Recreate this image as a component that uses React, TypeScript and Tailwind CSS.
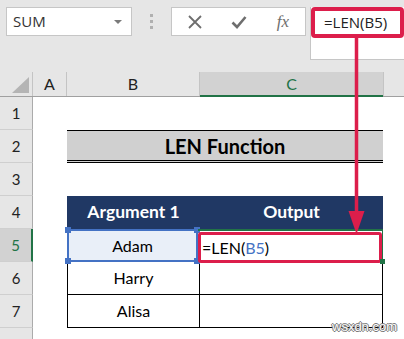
import React from 'react';

const calibri = "font-['Lato','Liberation_Sans',sans-serif]";
const segoe = "font-['Open_Sans','Liberation_Sans',sans-serif]";

const RowHead = ({ n, active = false }: { n: number; active?: boolean }) => (
  <div
    className={`w-[33px] shrink-0 h-full flex items-center justify-center text-[15px] border-b border-[#cfcfcf] ${
      active
        ? 'bg-[#d2d2d2] text-[#217346] border-r-2 border-r-[#217346]'
        : 'bg-[#e6e6e6] text-[#222] border-r border-r-[#ababab]'
    }`}
  >
    {n}
  </div>
);

const App: React.FC = () => {
  return (
    <div className={`relative w-[404px] h-[339px] overflow-hidden bg-white ${calibri}`}>
      {/* Formula bar */}
      <div className="h-[72px] bg-[#e6e6e6] flex items-start pt-[7px] pl-[6px]">
        <div className={`w-[126px] h-[29px] bg-white border border-[#c6c6c6] flex items-center justify-between pl-[6px] pr-[9px] ${segoe}`}>
          <span className="text-[15px] text-[#333] leading-none">SUM</span>
          <span className="w-0 h-0 border-l-[4px] border-r-[4px] border-t-[4px] border-l-transparent border-r-transparent border-t-[#7a7a7a]"></span>
        </div>
        <div className="w-[39px] h-[29px] flex flex-col items-center justify-center gap-[3px]">
          <span className="w-[3px] h-[3px] bg-[#b0b0b0]"></span>
          <span className="w-[3px] h-[3px] bg-[#b0b0b0]"></span>
          <span className="w-[3px] h-[3px] bg-[#b0b0b0]"></span>
        </div>
        <div className="w-[135px] h-[29px] bg-white border border-[#c6c6c6] flex items-center">
          <div className="w-[44px] flex justify-center ml-[1px]">
            <svg width="14" height="14" viewBox="0 0 14 14">
              <path d="M1 1 L13 13 M13 1 L1 13" stroke="#6e6e6e" strokeWidth="1.8" />
            </svg>
          </div>
          <div className="w-[44px] flex justify-center">
            <svg width="16" height="14" viewBox="0 0 16 14">
              <path d="M1.5 7.5 L6 12 L14.5 2" stroke="#6e6e6e" strokeWidth="2.6" fill="none" />
            </svg>
          </div>
          <div className="w-[44px] flex justify-center">
            <span className="font-['Liberation_Serif',serif] italic text-[17px] text-[#6e6e6e] leading-none">fx</span>
          </div>
        </div>
        <div className="ml-[4px] flex-1 h-[53px] bg-white border-l border-b border-[#c6c6c6]">
          <div className={`w-[93px] h-[31px] border-4 border-[#dc1e4b] rounded-[4px] flex items-center pl-[9px] ${segoe}`}>
            <span className="text-[15px] text-[#222] leading-none">=LEN(B5)</span>
          </div>
        </div>
      </div>

      {/* Column headers */}
      <div className="flex h-[25px] border-b border-[#a0a0a0] text-[16px] text-[#222]">
        <div className="w-[33px] shrink-0 bg-[#e6e6e6] border-r border-[#c4c4c4] flex items-end justify-end pr-[3px] pb-[3px]">
          <svg width="17" height="16" viewBox="0 0 17 16">
            <polygon points="17,0 17,16 0,16" fill="#b4b4b4" />
          </svg>
        </div>
        <div className="w-[34px] shrink-0 bg-[#e6e6e6] border-r border-[#c4c4c4] flex items-center justify-center">A</div>
        <div className="w-[133px] shrink-0 bg-[#e6e6e6] border-r border-[#c4c4c4] flex items-center justify-center">B</div>
        <div className="w-[183px] shrink-0 bg-[#d2d2d2] border-b-2 border-[#217346] -mb-px text-[#217346] flex items-center justify-center">C</div>
        <div className="flex-1 bg-[#e6e6e6] border-l border-[#c4c4c4]"></div>
      </div>

      {/* Row 1 */}
      <div className="flex h-[33px]">
        <RowHead n={1} />
      </div>

      {/* Row 2 - title */}
      <div className="flex h-[33px]">
        <RowHead n={2} />
        <div className="w-[34px] shrink-0"></div>
        <div className="w-[316px] shrink-0 bg-[#d0d0d0] border-t border-black border-b-[3px] border-b-black [border-bottom-style:double] flex items-center justify-center">
          <span className="text-[20px] font-bold text-black">LEN Function</span>
        </div>
      </div>

      {/* Row 3 */}
      <div className="flex h-[33px]">
        <RowHead n={3} />
      </div>

      {/* Row 4 - table header */}
      <div className="flex h-[33px]">
        <RowHead n={4} />
        <div className="w-[34px] shrink-0"></div>
        <div className="w-[133px] shrink-0 bg-[#203864] flex items-center justify-center">
          <span className="text-[17.5px] font-bold text-white">Argument 1</span>
        </div>
        <div className="w-[183px] shrink-0 bg-[#203864] flex items-center justify-center">
          <span className="text-[17.5px] font-bold text-white">Output</span>
        </div>
      </div>

      {/* Row 5 */}
      <div className="flex h-[33px]">
        <RowHead n={5} active />
        <div className="w-[34px] shrink-0"></div>
        <div className="relative w-[131px] shrink-0 bg-[#e9eff8] border-2 border-[#4472c4] flex items-center justify-center text-[16px] text-black">
          Adam
          <span className="absolute -left-[4px] -top-[4px] w-[6px] h-[6px] bg-[#4472c4]"></span>
          <span className="absolute -right-[4px] -top-[4px] w-[6px] h-[6px] bg-[#4472c4]"></span>
          <span className="absolute -left-[4px] -bottom-[4px] w-[6px] h-[6px] bg-[#4472c4]"></span>
          <span className="absolute -right-[4px] -bottom-[4px] w-[6px] h-[6px] bg-[#4472c4]"></span>
        </div>
        <div className="relative w-[185px] shrink-0 border-t-2 border-r border-[#217346] pt-[1px]">
          <div className="h-[31px] border-[3px] border-[#dc1e4b] rounded-[3px] flex items-center pl-[1px] text-[16px] text-black">
            =LEN(<span className="text-[#4472c4]">B5</span>)
          </div>
          <span className="absolute -right-[3px] -bottom-[2px] w-[5px] h-[5px] bg-[#217346]"></span>
        </div>
      </div>

      {/* Row 6 */}
      <div className="flex h-[33px]">
        <RowHead n={6} />
        <div className="w-[34px] shrink-0"></div>
        <div className="w-[133px] shrink-0 border-l border-r border-b border-black flex items-center justify-center text-[16px] text-black">
          Harry
        </div>
        <div className="w-[183px] shrink-0 border-r border-b border-black"></div>
      </div>

      {/* Row 7 */}
      <div className="flex h-[33px]">
        <RowHead n={7} />
        <div className="w-[34px] shrink-0"></div>
        <div className="w-[133px] shrink-0 border-l border-r border-b border-black flex items-center justify-center text-[16px] text-black">
          Alisa
        </div>
        <div className="w-[183px] shrink-0 border-r border-b border-black"></div>
      </div>

      {/* Row 8 */}
      <div className="flex h-[33px]">
        <div className="w-[33px] shrink-0 h-full bg-[#e6e6e6] border-r border-[#ababab]"></div>
      </div>

      {/* Annotation arrow */}
      <svg className="absolute left-0 top-0 pointer-events-none" width="404" height="339" viewBox="0 0 404 339">
        <line x1="356.5" y1="37" x2="356.5" y2="214" stroke="#dc1e4b" strokeWidth="3.5" />
        <polygon points="348.5,211 364.5,211 356.5,234" fill="#dc1e4b" />
      </svg>

      {/* Watermark */}
      <span className="absolute left-[332px] top-[320px] whitespace-nowrap font-['Liberation_Sans',sans-serif] text-[13px] text-white leading-none [text-shadow:1px_0_0_#777,-1px_0_0_#777,0_1px_0_#777,0_-1px_0_#777]">
        wsxdn.com
      </span>
    </div>
  );
};

export default App;
